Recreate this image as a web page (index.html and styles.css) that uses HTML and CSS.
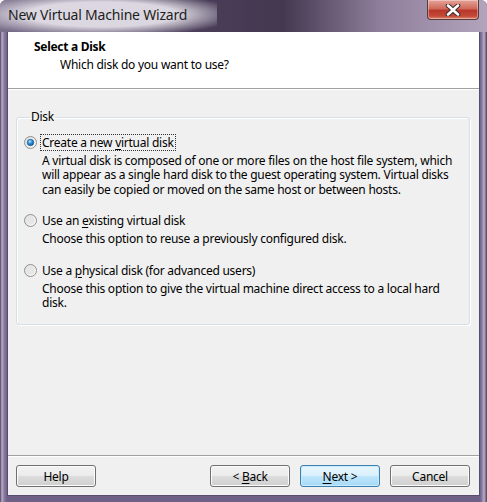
FILE: index.html
```html
<!DOCTYPE html>
<html>
<head>
<meta charset="utf-8">
<link rel="stylesheet" href="styles.css">
</head>
<body>
<div class="window">
  <div class="titlebar">
    <span class="title">New Virtual Machine Wizard</span>
    <div class="close">
      <svg width="20" height="12" viewBox="0 0 20 12">
        <path d="M5 1.5 L15 10.5 M15 1.5 L5 10.5" stroke="#3a2a2a" stroke-width="4.6" stroke-linecap="round"/>
        <path d="M5 1.5 L15 10.5 M15 1.5 L5 10.5" stroke="#ffffff" stroke-width="2.6" stroke-linecap="round"/>
      </svg>
    </div>
  </div>
  <div class="client">
    <div class="header">
      <div class="h-title">Select a Disk</div>
      <div class="h-sub">Which disk do you want to use?</div>
    </div>
    <div class="content">
      <fieldset class="group">
        <legend>Disk</legend>
        <div class="option">
          <div class="opt-row">
            <svg class="radio" width="13" height="13" viewBox="0 0 13 13">
              <defs>
                <linearGradient id="rb" x1="0" y1="0" x2="1" y2="1">
                  <stop offset="0" stop-color="#dcdcdc"/>
                  <stop offset="1" stop-color="#ffffff"/>
                </linearGradient>
                <radialGradient id="dot" cx="0.4" cy="0.35" r="0.7">
                  <stop offset="0" stop-color="#b8e4fa"/>
                  <stop offset="0.45" stop-color="#2f8fd6"/>
                  <stop offset="1" stop-color="#0d4f8f"/>
                </radialGradient>
              </defs>
              <circle cx="6.5" cy="6.5" r="6" fill="url(#rb)" stroke="#8e8f8f" stroke-width="1"/>
              <circle cx="6.5" cy="6.5" r="3.3" fill="url(#dot)" stroke="#1c5a8e" stroke-width="0.6"/>
            </svg>
            <span class="opt-label focus">Create a new <u>v</u>irtual disk</span>
          </div>
          <p class="desc">A virtual disk is composed of one or more files on the host file system, which will appear as a single hard disk to the guest operating system. Virtual disks can easily be copied or moved on the same host or between hosts.</p>
        </div>
        <div class="option">
          <div class="opt-row">
            <svg class="radio" width="13" height="13" viewBox="0 0 13 13">
              <circle cx="6.5" cy="6.5" r="6" fill="url(#rb)" stroke="#8e8f8f" stroke-width="1"/>
              <circle cx="6.5" cy="6.5" r="4" fill="#e6e6e6"/>
            </svg>
            <span class="opt-label">Use an <u>e</u>xisting virtual disk</span>
          </div>
          <p class="desc">Choose this option to reuse a previously configured disk.</p>
        </div>
        <div class="option">
          <div class="opt-row">
            <svg class="radio" width="13" height="13" viewBox="0 0 13 13">
              <circle cx="6.5" cy="6.5" r="6" fill="url(#rb)" stroke="#8e8f8f" stroke-width="1"/>
              <circle cx="6.5" cy="6.5" r="4" fill="#e6e6e6"/>
            </svg>
            <span class="opt-label">Use a <u>p</u>hysical disk (for advanced users)</span>
          </div>
          <p class="desc">Choose this option to give the virtual machine direct access to a local hard disk.</p>
        </div>
      </fieldset>
    </div>
    <div class="footer">
      <button class="btn">Help</button>
      <div class="spacer"></div>
      <button class="btn">&lt; <u>B</u>ack</button>
      <button class="btn default"><u>N</u>ext &gt;</button>
      <button class="btn">Cancel</button>
    </div>
  </div>
</div>
</body>
</html>
```

FILE: styles.css
```css
html, body {
  margin: 0;
  padding: 0;
  width: 487px;
  height: 502px;
  overflow: hidden;
  background: #ffffff;
}

.window {
  width: 487px;
  height: 502px;
  box-sizing: border-box;
  display: flex;
  flex-direction: column;
  background: linear-gradient(to right, #4d4060 0px, #b9afc8 2px, #8a7ca2 4px, #6f6088 7px, #6f6088 480px, #8a7ca2 482px, #b9afc8 484px, #4d4060 487px);
  border-radius: 6px 6px 0 0;
  font-family: "Noto Sans", "Open Sans", sans-serif;
  font-size: 12px;
  letter-spacing: -0.25px;
  color: #000;
}

.titlebar {
  height: 32px;
  flex: none;
  display: flex;
  align-items: flex-start;
  background: linear-gradient(to right, #7a6e8a 0%, #4a3e5a 40%, #43384f 58%, #8e7e9c 78%, #b3a4bc 100%);
  border-radius: 6px 6px 0 0;
  position: relative;
}

.title {
  font-size: 14px;
  letter-spacing: -0.2px;
  color: #1e1e1e;
  padding: 6px 30px 0 12px;
  margin-left: -4px;
  height: 26px;
  line-height: 18px;
  background: radial-gradient(ellipse 62% 70% at 48% 45%, rgba(226,222,230,0.95) 55%, rgba(226,222,230,0) 100%);
}

.close {
  position: absolute;
  right: 8px;
  top: 0;
  width: 52px;
  height: 20px;
  box-sizing: border-box;
  border: 1px solid #5a3b3b;
  border-top: none;
  border-radius: 0 0 4px 4px;
  background: linear-gradient(to bottom, #e6a49a 0%, #cf6a5a 45%, #b8372a 55%, #c24a38 85%, #e08a70 100%);
  box-shadow: inset 0 0 0 1px rgba(255,255,255,0.35);
  display: flex;
  align-items: center;
  justify-content: center;
}

.client {
  flex: 1;
  margin: 0 8px 7px 8px;
  background: #f0f0f0;
  display: flex;
  flex-direction: column;
  box-shadow: 0 0 0 1px #5a4c70;
}

.header {
  height: 57px;
  flex: none;
  background: #ffffff;
  border-bottom: 1px solid #a0a0a0;
  box-shadow: 0 1px 0 #ffffff;
  box-sizing: border-box;
}

.h-title {
  font-weight: bold;
  font-size: 12px;
  padding: 7px 0 0 26px;
  line-height: 16px;
  letter-spacing: -0.3px;
}

.h-sub {
  padding: 2px 0 0 52px;
  line-height: 16px;
}

.content {
  flex: 1;
  padding: 21px 9px 0 8px;
}

.group {
  margin: 0;
  padding: 0 7px 14px 7px;
  border: 1px solid #d5dfe5;
  border-radius: 3px;
  box-shadow: inset 1px 1px 0 #ffffff, 1px 1px 0 #ffffff;
  min-width: 0;
}

.group legend {
  padding: 0 1px;
  margin-left: 6px;
  line-height: 14px;
}

.option {
  margin-top: 10px;
}

.option + .option {
  margin-top: 15px;
}

.opt-row {
  display: flex;
  align-items: center;
  height: 17px;
}

.radio {
  flex: none;
  margin-right: 3px;
}

.opt-label {
  padding: 0 1px;
  line-height: 15px;
  border: 1px dotted transparent;
}

.opt-label.focus {
  border-color: #333;
}

.desc {
  margin: 3px 0 0 18px;
  line-height: 14.4px;
}

.footer {
  height: 40px;
  flex: none;
  box-sizing: border-box;
  border-top: 1px solid #a0a0a0;
  box-shadow: inset 0 1px 0 #ffffff;
  display: flex;
  align-items: flex-start;
  padding: 9px 9px 0 8px;
  gap: 10px;
}

.spacer {
  flex: 1;
}

.btn {
  width: 80px;
  height: 22px;
  margin: 0;
  padding: 0;
  font-family: inherit;
  font-size: 12px;
  letter-spacing: -0.25px;
  color: #000;
  border: 1px solid #707070;
  border-radius: 3px;
  background: linear-gradient(to bottom, #f2f2f2 0%, #ebebeb 50%, #dddddd 51%, #cfcfcf 100%);
  box-shadow: inset 0 0 0 1px #fcfcfc;
}

.btn.default {
  border-color: #3c7fb1;
  background: linear-gradient(to bottom, #eaf6fd 0%, #d9f0fc 50%, #bee6fd 51%, #a7d9f5 100%);
  box-shadow: inset 0 0 0 1px #c6ecfd;
}

u {
  text-decoration: underline;
  text-underline-offset: 2px;
}
```
